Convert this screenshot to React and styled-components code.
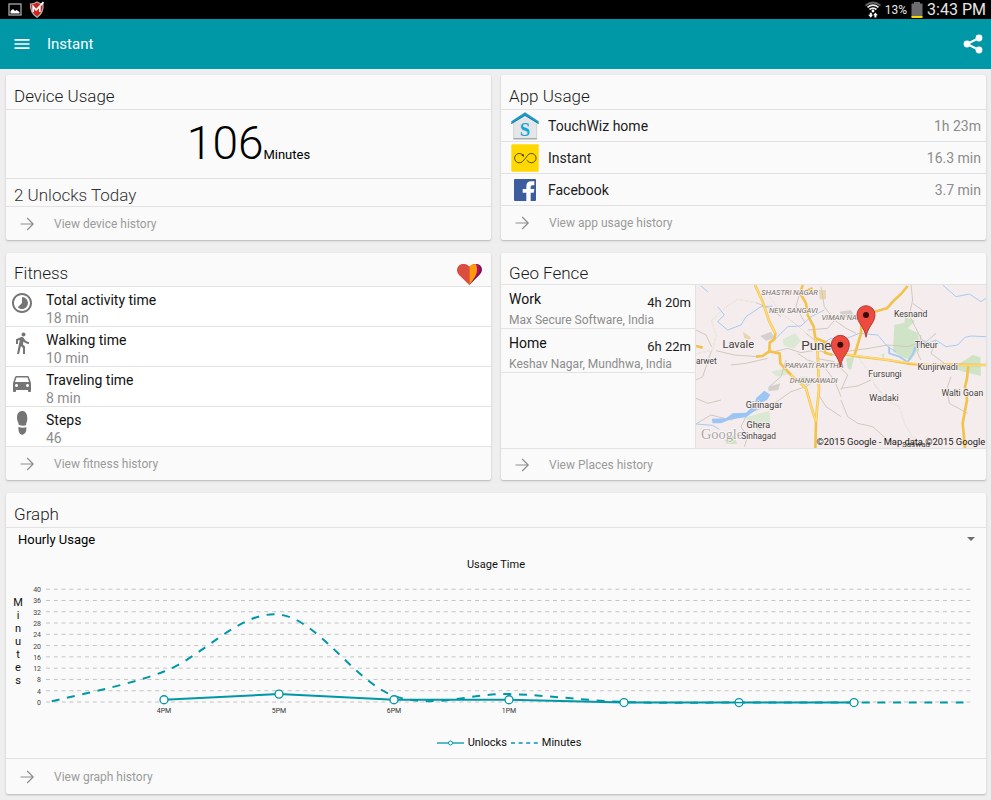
import React from 'react';
import styled, { createGlobalStyle } from 'styled-components';
import {
  MdMenu,
  MdTimelapse,
  MdDirectionsWalk,
  MdDirectionsCar,
} from 'react-icons/md';

const TEAL = '#0097a7';
const LINE = '#e2e2e2';

const GlobalStyle = createGlobalStyle`
  *, *::before, *::after { box-sizing: border-box; }
  body {
    margin: 0;
    background: #eeeeee;
    color: #1c1c1c;
    font-family: Roboto, "Liberation Sans", sans-serif;
    font-size: 14px;
  }
  ul, h1, h2, p { margin: 0; padding: 0; }
  ul { list-style: none; }
  h1, h2 { font-weight: 400; }
  svg { display: block; flex: none; }
`;

const StatusBar = styled.div`
  display: flex;
  align-items: center;
  justify-content: space-between;
  height: 19px;
  padding: 0 5px 0 8px;
  background: #000;
  color: #e6e6e6;
`;

const StatusGroup = styled.div`
  display: flex;
  align-items: center;
  gap: ${(p) => p.$gap}px;
`;

const BatteryText = styled.span`
  font-size: 12px;
`;

const Clock = styled.time`
  font-size: 16px;
  line-height: 19px;
`;

const AppBar = styled.header`
  display: flex;
  align-items: center;
  height: 50px;
  padding: 0 8px 0 12px;
  background: ${TEAL};
  color: #fff;
`;

const BarTitle = styled.h1`
  flex: 1;
  margin-left: 15px;
  font-size: 15px;
`;

const IconButton = styled.button`
  display: flex;
  padding: 0;
  border: 0;
  background: none;
  color: inherit;
  cursor: pointer;
`;

const Page = styled.main`
  display: grid;
  grid-template-columns: minmax(0, 1fr) minmax(0, 1fr);
  gap: 13px 10px;
  padding: 6px 5px 6px 6px;
`;

const Card = styled.section`
  display: flex;
  flex-direction: column;
  grid-column: ${(p) => (p.$wide ? '1 / -1' : 'auto')};
  background: #fafafa;
  border-radius: 2px;
  box-shadow: 0 1px 2px rgba(0, 0, 0, 0.24);
  overflow: hidden;
`;

const CardHeader = styled.div`
  display: flex;
  align-items: flex-end;
  justify-content: space-between;
  height: ${(p) => p.$height || 35}px;
  padding: 0 9px ${(p) => (p.$height === 32 ? 0 : 1)}px 8px;
  border-bottom: 1px solid ${LINE};
`;

const CardTitle = styled.h2`
  font-size: 17px;
  font-weight: 300;
  line-height: ${(p) => (p.$low ? 22 : 24)}px;
`;

const CardLink = styled.a`
  display: flex;
  flex: 1;
  align-items: center;
  gap: 20px;
  min-height: ${(p) => p.$height || 33}px;
  padding-left: 14px;
  color: #9a9a9a;
  font-size: 12px;
  text-decoration: none;
`;

const Total = styled.p`
  display: flex;
  align-items: baseline;
  justify-content: center;
  height: 69px;
  border-bottom: 1px solid ${LINE};
  color: #000;
  font-size: 13px;
  line-height: 66px;
`;

const TotalValue = styled.span`
  font-size: 46px;
  font-weight: 300;
`;

const Unlocks = styled.p`
  height: 28px;
  padding: 0 8px;
  border-bottom: 1px solid ${LINE};
  color: #333;
  font-size: 17px;
  font-weight: 300;
  line-height: 32px;
`;

const AppRow = styled.li`
  display: flex;
  align-items: center;
  gap: 9px;
  height: 32px;
  padding: 1px 5px 0 10px;
  border-bottom: 1px solid ${LINE};
`;

const AppName = styled.span`
  flex: 1;
`;

const Muted = styled.span`
  color: #8c8c8c;
`;

const FitnessList = styled.ul`
  background: #fff;
`;

const FitnessRow = styled.li`
  display: flex;
  gap: 12px;
  height: 40px;
  padding: 4px 4px 0;
  border-bottom: 1px solid ${LINE};
  color: #757575;
`;

const IconCell = styled.div`
  display: flex;
  justify-content: center;
  width: 24px;
`;

const Stacked = styled.div`
  display: flex;
  flex-direction: column;
  line-height: 18px;
`;

const Strong = styled.span`
  color: #111;
`;

const GeoBody = styled.div`
  display: grid;
  grid-template-columns: 2fr 3fr;
  height: 164px;
  border-bottom: 1px solid ${LINE};
`;

const PlaceRow = styled.li`
  display: grid;
  grid-template-columns: 1fr auto;
  grid-template-rows: 22px 18px;
  height: 44px;
  padding: 4px 4px 0 8px;
  border-bottom: 1px solid ${LINE};
  line-height: 20px;
`;

const PlaceTime = styled.span`
  padding-top: 4px;
  font-size: 13px;
`;

const PlaceAddress = styled.span`
  grid-column: 1 / -1;
  color: #8c8c8c;
  font-size: 12px;
  line-height: 18px;
  white-space: nowrap;
`;

const MapSvg = styled.svg`
  width: 100%;
  height: 100%;
  border-left: 1px solid ${LINE};
`;

const PickerField = styled.div`
  display: flex;
  align-items: center;
  padding-right: 11px;
`;

const Picker = styled.select`
  flex: 1;
  height: 22px;
  margin-right: -8px;
  padding: 0 12px;
  appearance: none;
  border: 0;
  background: none;
  color: #000;
  font: 13px Roboto, "Liberation Sans", sans-serif;
`;

const ChartArea = styled.div`
  border-bottom: 1px solid ${LINE};
`;

const ChartTitle = styled.p`
  padding-top: 7px;
  color: #111;
  font-size: 11px;
  line-height: 16px;
  text-align: center;
`;

const ChartRow = styled.div`
  display: flex;
  padding: 13px 13px 0 7px;
`;

const AxisName = styled.div`
  display: flex;
  flex-direction: column;
  align-items: center;
  width: 10px;
  padding-top: 10px;
  color: #111;
  font-size: 11px;
`;

const AxisLetter = styled.span`
  line-height: 13px;
`;

const Plot = styled.svg`
  flex: 1;
  min-width: 0;
  height: auto;
  overflow: visible;
`;

const Legend = styled.div`
  display: flex;
  align-items: center;
  justify-content: center;
  gap: 4px;
  height: 31px;
  margin-left: 26px;
  color: #111;
  font-size: 11px;
`;

function HistoryLink({ height, children }) {
  return (
    <CardLink href="#history" $height={height}>
      <svg width="14" height="14" viewBox="0 0 14 14" fill="none" stroke="#8e8e8e" strokeWidth="1.2" aria-hidden="true">
        <path d="M0.5 7H13M7.2 1L13.2 7L7.2 13" />
      </svg>
      {children}
    </CardLink>
  );
}

function ShareIcon() {
  return (
    <svg width="20" height="20" viewBox="0 0 20 20" fill="currentColor" aria-hidden="true">
      <path d="M16 4L4 10L16 16" fill="none" stroke="currentColor" strokeWidth="2" />
      <circle cx="4" cy="10" r="3.400" />
      <circle cx="16" cy="4" r="3.400" />
      <circle cx="16" cy="16" r="3.400" />
    </svg>
  );
}

function PictureIcon() {
  return (
    <svg width="14" height="13" viewBox="0 0 14 13" aria-hidden="true">
      <rect x="1" y="1" width="12" height="11" fill="none" stroke="#aaa" strokeWidth="1.3" />
      <path d="M2.500 10.500V8L5 6L7 8L8.600 7L11.500 9V10.500Z" fill="#fff" />
    </svg>
  );
}

function ShieldIcon() {
  return (
    <svg width="16" height="17" viewBox="0 0 16 17" aria-hidden="true">
      <path d="M1.500 3Q5 3 8 1Q11 3 14 3Q15 12 8 16.200Q1 12 1.500 3Z" fill="#d3211d" stroke="#b5b0b0" strokeWidth="1.2" />
      <path d="M4.200 11V5.500L7.200 9L14.500 1.200M10.800 11V5.500" fill="none" stroke="#fff" strokeWidth="1.700" />
    </svg>
  );
}

function WifiIcon() {
  return (
    <svg width="16" height="17" viewBox="0 0 16 17" fill="none" aria-hidden="true">
      <path d="M0.500 4.500Q8 -1.500 15.500 4.500" stroke="#666" strokeWidth="1.800" />
      <path d="M2.500 6.300Q8 2 13.500 6.300M4.500 8.500Q8 5.600 11.500 8.500" stroke="#eee" strokeWidth="1.700" />
      <circle cx="8" cy="10" r="1.400" fill="#fff" />
      <path d="M3.200 13.800H4.800V11.800H6.800V13.800H8L5.800 16.800ZM8.200 14.200L10.400 11.400L12.800 14.200H11.400V16.600H9.400V14.200Z" fill="#fff" />
    </svg>
  );
}

function BatteryIcon() {
  return (
    <svg width="12" height="17" viewBox="0 0 12 17" aria-hidden="true">
      <path d="M3 1H9V2.500H11.500V16H0.500V2.500H3Z" fill="#6c6c6c" />
      <rect x="0.500" y="15" width="11" height="2" fill="#ffd500" />
    </svg>
  );
}

function TouchWizIcon() {
  return (
    <svg width="28" height="28" viewBox="0 0 84 84" aria-hidden="true">
      <path d="M8 32L42 8L77 32V82H8Z" fill="#e4e6e8" stroke="#c2c5c8" strokeWidth="2" />
      <path d="M8 80H77" stroke="#9ea2a5" strokeWidth="3" />
      <path d="M1 28L42 1L83 28V36L42 11L1 36Z" fill="#1d9bc9" />
      <path d="M1 35L42 10L83 35" fill="none" stroke="#0e7199" strokeWidth="2" />
      <text x="42" y="71" textAnchor="middle" fontFamily="Liberation Serif, serif" fontSize="56" fontWeight="700" fill="#16a6d6">S</text>
    </svg>
  );
}

function InstantIcon() {
  return (
    <svg width="28" height="28" viewBox="0 0 84 84" aria-hidden="true">
      <rect x="1" y="1" width="82" height="82" rx="3" fill="#ffd800" />
      <path d="M36 34A14 14 0 1 0 34 53Q40 47 43 43L50 34A14 14 0 1 1 51 52L47 48" fill="none" stroke="#3c3608" strokeWidth="2.600" />
      <path d="M31 34L39 39L38 30Z" fill="#3c3608" />
    </svg>
  );
}

function FacebookIcon() {
  return (
    <svg width="28" height="28" viewBox="0 0 84 84" aria-hidden="true">
      <rect x="9" y="9" width="66" height="66" rx="3" fill="#3d5c9e" />
      <path d="M46 75V50H35V39H46V31Q46 16 61 16H70V28H64Q59 28 59 33V39H70L68 50H59V75Z" fill="#fff" />
    </svg>
  );
}

function StepsIcon() {
  return (
    <svg width="36" height="24" viewBox="0 0 108 72" fill="#757575" aria-hidden="true">
      <path d="M54 0C65 -1 70 10 70 23C70 32 66 35 66 43Q55 46 44 41C44 34 39 31 39 21C39 8 44 1 54 0Z" />
      <path d="M43 48Q55 52 67 49C68 62 63 72 53 71C45 69 43 60 43 48Z" />
    </svg>
  );
}

function HeartIcon() {
  return (
    <svg width="25" height="21" viewBox="0 0 75 63" aria-hidden="true">
      <path d="M37 63L67 33C76 25 78 12 69 4C60 -2 50 -1 37 8Z" fill="#7c1158" />
      <path d="M37 63L60 34C70 23 70 10 64 2C56 -1 48 0 37 8Z" fill="#b5125f" />
      <path d="M37 63L54 38C61 26 62 10 56 0C48 0 42 2 37 8Z" fill="#ff9a0a" />
      <path d="M37 63L7 34C-3 24 -2 10 8 3C18 -3 31 0 37 8Z" fill="#dc4c3f" />
    </svg>
  );
}

function Pin({ x, y }) {
  return (
    <g transform={`translate(${x} ${y})`}>
      <path d="M0 0C-5 -34 -27 -42 -27 -68A27 27 0 0 1 27 -68C27 -42 5 -34 0 0Z" fill="#ee4b40" stroke="#a82c24" strokeWidth="2.500" />
      <circle cy="-67" r="9" fill="#3a0906" />
    </g>
  );
}

function PuneMap() {
  return (
    <MapSvg viewBox="15 15 870 489" preserveAspectRatio="xMidYMid slice" role="img" aria-label="Map of Pune">
      <rect x="0" y="0" width="900" height="520" fill="#f5eded" />
      <g fill="#cfe3c6">
        <path d="M610 135L640 128L642 112L672 122L650 145L682 160L684 205L660 240L635 232L606 215Z" />
        <path d="M804 252L845 225L868 232L870 288L830 278L800 270Z" />
        <path d="M275 178L312 160L330 182L308 206L278 196Z" fill="#dbe8d3" />
        <path d="M165 412L235 392L238 430L205 452L175 435ZM240 275L285 265L298 282L258 290Z" fill="#dbe8d3" />
        <path d="M465 235L490 230L480 270L470 265ZM326 290H350V315H328ZM100 480L130 465L138 492H108ZM570 225L580 220L578 234Z" />
      </g>
      <g fill="#d5d0ce">
        <path d="M208 168L240 155L252 175L225 182ZM232 320L268 310L262 330L232 334ZM445 95L480 90L490 108L455 112Z" />
        <path d="M384 30H405V58H386Z" fill="#e8d6b2" />
        <path d="M155 155L180 172L175 180L160 175Z" fill="#e8d6b2" />
      </g>
      <g fill="none" stroke="#d0c9be" strokeWidth="3" strokeLinejoin="round">
        <path d="M195 68L140 58L95 88L62 122L75 165L65 210L15 222M75 212L130 225L200 230M62 210L35 290L15 300" />
        <path d="M222 30L250 70L275 105L310 130L345 160L370 180M270 110L235 85L195 68M330 25L315 80L340 125" />
        <path d="M15 355L50 370L90 360M15 432L60 405L120 420L170 400L250 370L300 335L345 320L375 300M170 400L150 440L170 470L160 500" />
        <path d="M250 215L290 205L330 218L375 210L430 225L480 212L535 205L590 195L650 200L680 190" />
        <path d="M660 15L665 60L655 105L672 140L690 175L700 190L735 160M665 70L700 95L675 105M690 165L680 220L690 240" />
        <path d="M500 230L530 270L550 310L585 360L625 380L640 430L670 480L680 504M550 312L575 345M450 325L500 318L540 300M450 360L470 410L500 430L545 440L590 480L625 490" />
        <path d="M390 20L400 80L430 120L465 145L495 160M350 150L410 145L440 110M375 235L430 245L470 285L450 330M395 255L430 300L450 350M320 220L350 240L378 250" />
        <path d="M15 150L45 165L62 200M120 255L165 250L230 235M285 240L270 290L235 320M380 340L405 380L450 410M780 290L768 325L775 370L830 400M735 180L720 220L760 250" />
      </g>
      <g fill="none" stroke="#fffdf6" strokeWidth="2" strokeLinejoin="round">
        <path d="M195 68L140 58L95 88L62 122L75 165L65 210L15 222M222 30L250 70L275 105L345 160M500 230L530 270L550 310L585 360L625 380L640 430L670 480" />
      </g>
      <g fill="none" stroke="#a8c9f2" strokeWidth="3" strokeLinejoin="round">
        <path d="M30 18L50 35M80 80L100 105L80 125L110 150L150 135L165 110L210 80L245 78M250 180L290 140L330 138L360 110L400 90" />
        <path d="M380 200L420 175L455 180L505 160L560 165L590 200L615 215M670 215L680 195L695 180L710 190L735 180L765 200L800 195L822 172L840 168L885 170M755 15L795 50L835 42L870 65L885 55" />
        <path d="M594 200L595 220L625 230L650 246L667 220L672 200" strokeWidth="6" />
        <path d="M15 432L65 436L85 448" />
      </g>
      <path d="M65 430L62 416L105 415L125 400L165 398L190 375L195 355L220 332L238 344L228 360L205 370L195 390L165 412L120 418L90 430Z" fill="#9cc5f6" />
      <g fill="none" stroke="#f3c24c" strokeWidth="8" strokeLinejoin="round">
        <path d="M192 15L215 65L235 125L253 160L250 178L236 188L235 214L266 220L268 250L300 285L345 325L352 350L368 405L375 422M235 214L215 228L195 230" />
        <path d="M335 15L328 40L345 70L350 105L368 140L373 175L380 220L384 330L378 385L375 425L373 505M328 40L365 25" />
        <path d="M375 175L400 185L430 200L445 220L490 228L590 240L660 252L725 256L770 254L885 255M400 185L402 218L425 225M490 228L510 160L512 110L540 98L588 85L608 62L630 42L650 18" />
        <path d="M832 258L828 295L822 320L828 360L815 430L822 504M15 198L35 203" />
      </g>
      <g fill="none" stroke="#ffdc7c" strokeWidth="4" strokeLinejoin="round">
        <path d="M192 15L215 65L235 125L253 160M300 285L345 325L352 350L368 405L375 422M373 175L380 220L384 330L378 385L375 425M445 220L590 240L725 256L885 255" />
      </g>
      <text x="30" y="478" fontFamily="Liberation Serif, serif" fontSize="43" fill="#aaa5a5" stroke="#fff" strokeWidth="3" paintOrder="stroke">Google</text>
      <g fill="#44403e" fontFamily="Roboto, sans-serif" fontSize="27" stroke="#f8f3f2" strokeWidth="4" paintOrder="stroke" textAnchor="middle">
        <text x="142" y="203" fontSize="33">Lavale</text>
        <text x="46" y="251" fontSize="25">arwet</text>
        <text x="376" y="211" fontSize="40">Pune</text>
        <text x="219" y="384">Girinagar</text>
        <text x="202" y="445">Ghera</text>
        <text x="203" y="476" fontSize="25">Sinhagad</text>
        <text x="659" y="111" fontSize="26">Kesnand</text>
        <text x="706" y="203">Theur</text>
        <text x="740" y="269" fontSize="26">Kunjirwadi</text>
        <text x="582" y="290" fontSize="26">Fursungi</text>
        <text x="579" y="363">Wadaki</text>
        <text x="814" y="348" fontSize="26">Walti Goan</text>
        <text x="675" y="500" fontSize="24">Saswad</text>
      </g>
      <g fill="#757069" fontFamily="Roboto, sans-serif" fontSize="23" fontStyle="italic" stroke="#f8f3f2" strokeWidth="4" paintOrder="stroke" textAnchor="middle">
        <text x="296" y="45">SHASTRI NAGAR</text>
        <text x="307" y="98">NEW SANGAVI</text>
        <text x="452" y="119">VIMAN NAG</text>
        <text x="370" y="264">PARVATI PAYTHA</text>
        <text x="368" y="308">DHANKAWADI</text>
      </g>
      <Pin x={525} y={172} />
      <Pin x={448} y={261} />
      <text x="883" y="494" textAnchor="end" fontFamily="Roboto, sans-serif" fontSize="28" fill="#1a1a1a">©2015 Google - Map data ©2015 Google</text>
    </MapSvg>
  );
}

const TICKS = [40, 36, 32, 28, 24, 20, 16, 12, 8, 4, 0];
const HOURS = ['4PM', '5PM', '6PM', '1PM'];
const FIRST_X = 26;
const STEP_X = 115;
const BASE_Y = 116;
const UNIT = 2.82;

const toPoints = (values, start) =>
  values.map((v, i) => [FIRST_X + STEP_X * (i + start), BASE_Y - v * UNIT]);

const minutes = toPoints([0, 10.8, 31, 2.2, 2.8, 0, -0.2, -0.2, -0.2], 0);
const unlocks = toPoints([0.8, 2.8, 0.8, 0.8, -0.2, -0.2, -0.2], 1);

function curve(points) {
  const at = (i) => points[Math.max(0, Math.min(points.length - 1, i))];
  let d = `M${points[0]}`;
  for (let i = 0; i < points.length - 1; i += 1) {
    const [a, b, c, e] = [at(i - 1), at(i), at(i + 1), at(i + 2)];
    const k = 0.17;
    d += `C${b[0] + (c[0] - a[0]) * k} ${b[1] + (c[1] - a[1]) * k} ${c[0] - (e[0] - b[0]) * k} ${c[1] - (e[1] - b[1]) * k} ${c}`;
  }
  return d;
}

function UsageChart() {
  return (
    <Plot viewBox="0 0 950 141" role="img" aria-label="Usage time by hour">
      {TICKS.map((t) => (
        <g key={t}>
          <path d={`M23 ${BASE_Y - t * UNIT}H949`} stroke="#c4c4c4" strokeWidth="1" strokeDasharray="4 3.8" />
          <text x="18" y={BASE_Y - t * UNIT + 3} textAnchor="end" fontSize="7" fill="#444">{t}</text>
        </g>
      ))}
      {HOURS.map((h, i) => (
        <text key={h} x={FIRST_X + STEP_X * (i + 1)} y="127" textAnchor="middle" fontSize="7" fill="#333">{h}</text>
      ))}
      <path d={curve(minutes)} fill="none" stroke={TEAL} strokeWidth="2" strokeDasharray="8 7.6" strokeDashoffset="-3" />
      <path d={`M${unlocks.join('L')}`} fill="none" stroke={TEAL} strokeWidth="2" />
      {unlocks.map(([x, y]) => (
        <circle key={x} cx={x} cy={y} r="4" fill="#fff" stroke={TEAL} strokeWidth="1.300" />
      ))}
      <path d={`M${unlocks[5][0] - 4} ${unlocks[5][1]}h8`} stroke={TEAL} strokeWidth="1.500" />
    </Plot>
  );
}

const APPS = [
  { name: 'TouchWiz home', time: '1h 23m', Icon: TouchWizIcon },
  { name: 'Instant', time: '16.3 min', Icon: InstantIcon },
  { name: 'Facebook', time: '3.7 min', Icon: FacebookIcon },
];

const FITNESS = [
  { name: 'Total activity time', value: '18 min', Icon: MdTimelapse },
  { name: 'Walking time', value: '10 min', Icon: MdDirectionsWalk },
  { name: 'Traveling time', value: '8 min', Icon: MdDirectionsCar },
  { name: 'Steps', value: '46', Icon: StepsIcon },
];

const PLACES = [
  { name: 'Work', time: '4h 20m', address: 'Max Secure Software, India' },
  { name: 'Home', time: '6h 22m', address: 'Keshav Nagar, Mundhwa, India' },
];

export default function App() {
  return (
    <>
      <GlobalStyle />
      <StatusBar>
        <StatusGroup $gap={7}>
          <PictureIcon />
          <ShieldIcon />
        </StatusGroup>
        <StatusGroup $gap={4}>
          <WifiIcon />
          <BatteryText>13%</BatteryText>
          <BatteryIcon />
          <Clock>3:43 PM</Clock>
        </StatusGroup>
      </StatusBar>
      <AppBar>
        <IconButton type="button" aria-label="Menu">
          <MdMenu size={20} />
        </IconButton>
        <BarTitle>Instant</BarTitle>
        <IconButton type="button" aria-label="Share">
          <ShareIcon />
        </IconButton>
      </AppBar>
      <Page>
        <Card>
          <CardHeader>
            <CardTitle>Device Usage</CardTitle>
          </CardHeader>
          <Total>
            <TotalValue>106</TotalValue>
            Minutes
          </Total>
          <Unlocks>2 Unlocks Today</Unlocks>
          <HistoryLink>View device history</HistoryLink>
        </Card>

        <Card>
          <CardHeader>
            <CardTitle>App Usage</CardTitle>
          </CardHeader>
          <ul>
            {APPS.map(({ name, time, Icon }) => (
              <AppRow key={name}>
                <Icon />
                <AppName>{name}</AppName>
                <Muted>{time}</Muted>
              </AppRow>
            ))}
          </ul>
          <HistoryLink>View app usage history</HistoryLink>
        </Card>

        <Card>
          <CardHeader $height={34}>
            <CardTitle>Fitness</CardTitle>
            <HeartIcon />
          </CardHeader>
          <FitnessList>
            {FITNESS.map(({ name, value, Icon }) => (
              <FitnessRow key={name}>
                <IconCell>
                  <Icon size={24} />
                </IconCell>
                <Stacked>
                  <Strong>{name}</Strong>
                  <Muted>{value}</Muted>
                </Stacked>
              </FitnessRow>
            ))}
          </FitnessList>
          <HistoryLink>View fitness history</HistoryLink>
        </Card>

        <Card>
          <CardHeader $height={32}>
            <CardTitle $low>Geo Fence</CardTitle>
          </CardHeader>
          <GeoBody>
            <ul>
              {PLACES.map((p) => (
                <PlaceRow key={p.name}>
                  <Strong>{p.name}</Strong>
                  <PlaceTime>{p.time}</PlaceTime>
                  <PlaceAddress>{p.address}</PlaceAddress>
                </PlaceRow>
              ))}
            </ul>
            <PuneMap />
          </GeoBody>
          <HistoryLink height={31}>View Places history</HistoryLink>
        </Card>

        <Card $wide>
          <CardHeader>
            <CardTitle>Graph</CardTitle>
          </CardHeader>
          <ChartArea>
            <PickerField>
              <Picker aria-label="Graph type" defaultValue="hourly">
                <option value="hourly">Hourly Usage</option>
              </Picker>
              <svg width="8" height="4" viewBox="0 0 8 4" aria-hidden="true">
                <path d="M0 0H8L4 4Z" fill="#6d6d6d" />
              </svg>
            </PickerField>
            <ChartTitle>Usage Time</ChartTitle>
            <ChartRow>
              <AxisName aria-label="Minutes">
                {[...'Minutes'].map((letter, i) => (
                  <AxisLetter key={i}>{letter}</AxisLetter>
                ))}
              </AxisName>
              <UsageChart />
            </ChartRow>
            <Legend>
              <svg width="27" height="6" viewBox="0 0 27 6" aria-hidden="true">
                <path d="M0 3H27" stroke={TEAL} strokeWidth="1.300" />
                <circle cx="13.500" cy="3" r="2" fill="#fff" stroke={TEAL} />
              </svg>
              Unlocks
              <svg width="27" height="6" viewBox="0 0 27 6" aria-hidden="true">
                <path d="M0 3H27" stroke={TEAL} strokeWidth="1.500" strokeDasharray="4 3.600" />
              </svg>
              Minutes
            </Legend>
          </ChartArea>
          <HistoryLink height={35}>View graph history</HistoryLink>
        </Card>
      </Page>
    </>
  );
}
